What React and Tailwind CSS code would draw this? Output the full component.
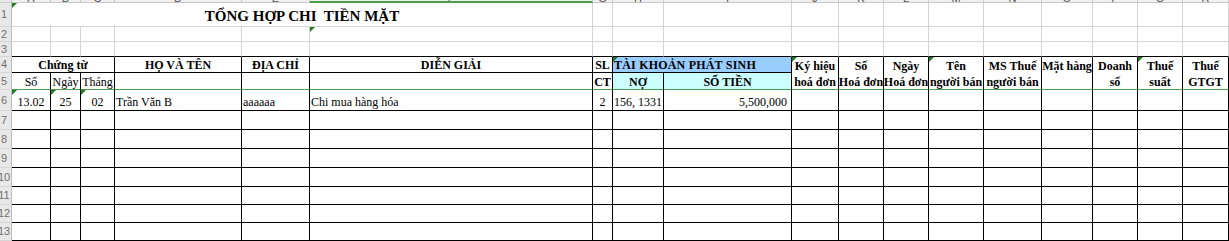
const LETTERS = ['A', 'B', 'C', 'D', 'E', 'F', 'G', 'H', 'I', 'J', 'K', 'L', 'M', 'N', 'O', 'P', 'Q', 'R'];

const empty = (n) => Array.from({ length: n }, () => ({}));

// one entry per cell, merged cells carry a span
const rows = [
  [{ span: 6, text: 'TỔNG HỢP CHI  TIỀN MẶT', title: true, tri: true }, ...empty(12)],
  [...empty(5), { tri: true }, ...empty(12)],
  empty(18),
  [
    { span: 3, text: 'Chứng từ', bold: true },
    { text: 'HỌ VÀ TÊN', bold: true },
    { text: 'ĐỊA CHỈ', bold: true },
    { text: 'DIỄN GIẢI', bold: true },
    { text: 'SL', bold: true },
    { span: 2, text: 'TÀI KHOẢN PHÁT SINH', bold: true, align: 'left', bg: 'blue', tri: true, wide: true },
    { text: 'Ký hiệu', bold: true, tri: true },
    { text: 'Số', bold: true },
    { text: 'Ngày', bold: true },
    { text: 'Tên', bold: true, tri: true },
    { text: 'MS Thuế', bold: true },
    { text: 'Mặt hàng', bold: true },
    { text: 'Doanh', bold: true },
    { text: 'Thuế', bold: true, tri: true },
    { text: 'Thuế', bold: true },
  ],
  [
    { text: 'Số' },
    { text: 'Ngày' },
    { text: 'Tháng' },
    {},
    {},
    {},
    { text: 'CT', bold: true },
    { text: 'NỢ', bold: true, bg: 'cyan' },
    { text: 'SỐ TIỀN', bold: true, bg: 'cyan' },
    { text: 'hoá đơn', bold: true },
    { text: 'Hoá đơn', bold: true },
    { text: 'Hoá đơn', bold: true },
    { text: 'người bán', bold: true },
    { text: 'người bán', bold: true },
    {},
    { text: 'số', bold: true },
    { text: 'suất', bold: true },
    { text: 'GTGT', bold: true },
  ],
  [
    { text: '13.02', tri: true },
    { text: '25', tri: true },
    { text: '02', tri: true },
    { text: 'Trần Văn B', align: 'left' },
    { text: 'aaaaaa', align: 'left' },
    { text: 'Chi mua hàng hóa', align: 'left' },
    { text: '2' },
    { text: '156, 1331', align: 'left' },
    { text: '5,500,000', align: 'right' },
    ...empty(9),
  ],
  ...Array.from({ length: 7 }, () => empty(18)),
];

function Cell({ cell, row, col }) {
  const span = cell.span || 1;
  const end = col + span - 1;

  const right = row <= 3 ? 'border-r-[#d4d4d4]' : 'border-r-black';
  let bottom = 'border-b border-b-black';
  if (row <= 2) bottom = 'border-b border-b-[#d4d4d4]';
  else if (row === 4 && end > 8) bottom = 'border-b-0';
  else if (row === 5) bottom = 'border-b border-b-[#4aa04a]';

  const spanCls = span === 6 ? 'col-span-6' : span === 3 ? 'col-span-3' : span === 2 ? 'col-span-2' : '';
  const justify =
    cell.align === 'left' ? 'justify-start pl-[1px]' : cell.align === 'right' ? 'justify-end pr-[4px]' : 'justify-center';
  const bg = cell.bg === 'blue' ? 'bg-[#99ccff]' : cell.bg === 'cyan' ? 'bg-[#ccffff]' : 'bg-white';
  const text = cell.title
    ? 'text-[15px] leading-[17px] font-bold pb-[1px]'
    : `text-[12px] leading-[14px] ${cell.bold ? 'font-bold' : ''} ${row === 6 ? 'pb-[1px]' : ''}`;

  return (
    <div className={`relative flex items-end whitespace-pre border-r ${right} ${bottom} ${spanCls} ${justify} ${bg} ${text}`}>
      {cell.tri && (
        <span className="absolute left-0 top-0 h-0 w-0 border-t-[5px] border-r-[5px] border-t-[#1f7a1f] border-r-transparent" />
      )}
      {cell.text && <span className={cell.wide ? 'tracking-[0.2px]' : ''}>{cell.text}</span>}
    </div>
  );
}

export default function App() {
  return (
    <div className="h-[241px] w-[1229px] overflow-hidden bg-white font-['Liberation_Serif',serif] text-black">
      <div className="grid grid-cols-[12px_39px_30px_34px_127px_68px_283px_20px_51px_128px_47px_45px_45px_55px_58px_51px_45px_45px_46px] grid-rows-[3px_24px_15px_15px_16px_17px_21px_19px_19px_19px_19px_18px_18px_18px]">
        {/* column letters strip, only its lower edge shows */}
        <div className="border-r border-b border-r-[#bdbdbd] border-b-[#c8c8c8] bg-[#e8e8e8]" />
        {LETTERS.map((l) => (
          <div
            key={l}
            className={`flex items-end justify-center overflow-hidden border-r border-r-[#c8c8c8] bg-[#f0f0f0] font-['Liberation_Sans',sans-serif] text-[11px] leading-[8px] text-[#555] ${
              l === 'F' ? 'border-b-2 border-b-[#4aa04a]' : 'border-b border-b-[#c8c8c8]'
            }`}
          >
            {l}
          </div>
        ))}

        {rows.map((cells, i) => {
          const row = i + 1;
          let col = 0;
          return [
            <div
              key={`h${row}`}
              className="flex items-center justify-center overflow-hidden border-r border-b border-r-[#bdbdbd] border-b-[#d6d6d6] bg-[#e8e8e8] pr-[3px] font-['Liberation_Sans',sans-serif] text-[11px] leading-none text-[#707070]"
            >
              {row}
            </div>,
            ...cells.map((cell) => {
              const c = col;
              col += cell.span || 1;
              return <Cell key={`${row}-${c}`} cell={cell} row={row} col={c} />;
            }),
          ];
        })}
      </div>
    </div>
  );
}
